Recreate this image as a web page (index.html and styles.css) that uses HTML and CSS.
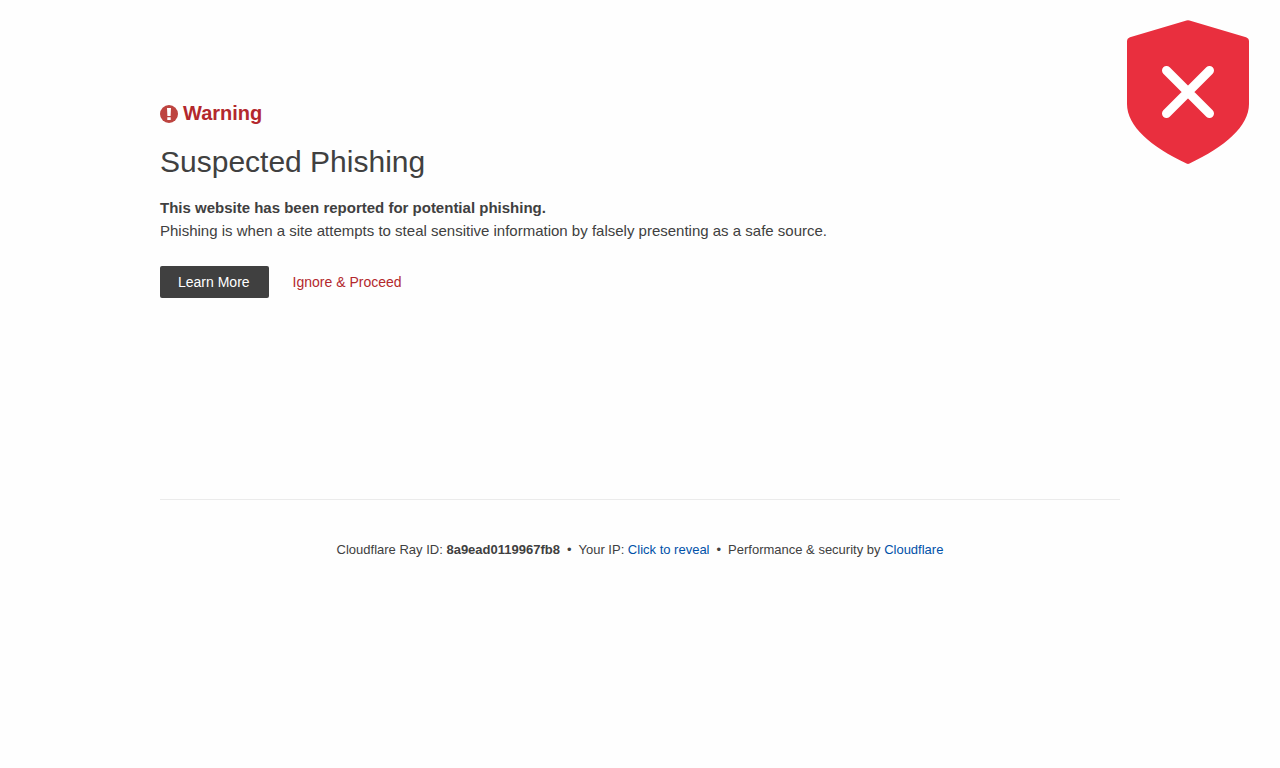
FILE: index.html
```html
<!DOCTYPE html>
<html lang="en">
<head>
    <meta charset="UTF-8">
    <meta name="viewport" content="width=device-width, initial-scale=1.0">
    <title>Suspected Phishing</title>
    <link rel="stylesheet" href="styles.css">
</head>
<body>

    <!-- Shield badge in the corner -->
    <svg class="shield" viewBox="0 0 122 144" aria-hidden="true">
        <path d="M59.500 .4Q61 0 62.500 .4L119 17.200Q122 18.200 122 21.500V84C122 106 98 127 62.500 143.500Q61 144.300 59.500 143.500C24 127 0 106 0 84V21.500Q0 18.200 3 17.200Z" fill="#e92f3e"/>
        <path d="M39.500 50.500L82.500 93.500M82.500 50.500L39.500 93.500" stroke="#fff" stroke-width="9" stroke-linecap="round"/>
    </svg>

    <main class="wrapper">
        <h1 class="warning">
            <svg class="warning-icon" viewBox="0 0 18 18" aria-hidden="true">
                <circle cx="9" cy="9" r="9" fill="#bd4440"/>
                <path d="M7 3h4l-.4 8H7.400zM7.300 12.200h3.400v2.800H7.300z" fill="#fff"/>
            </svg>
            Warning
        </h1>
        <h2 class="title">Suspected Phishing</h2>

        <section class="message">
            <strong>This website has been reported for potential phishing.</strong>
            <p>Phishing is when a site attempts to steal sensitive information by falsely presenting as a safe source.</p>
            <div class="actions">
                <a class="btn" href="#">Learn More</a>
                <button type="button" class="btn-link">Ignore &amp; Proceed</button>
            </div>
        </section>

        <footer class="footer">
            <span>Cloudflare Ray ID: <strong>8a9ead0119967fb8</strong></span>
            <span>&bull;</span>
            <span>Your IP: <button type="button" class="reveal">Click to reveal</button></span>
            <span>&bull;</span>
            <span>Performance &amp; security by <a href="#">Cloudflare</a></span>
        </footer>
    </main>

</body>
</html>
```
FILE: styles.css
```css
/* Reset */
* {
    margin: 0;
    padding: 0;
    box-sizing: border-box;
}

body {
    background: #fefefe;
    color: #404040;
    font-family: "Liberation Sans", Arial, sans-serif;
    font-size: 15px;
    line-height: 23px;
}

a {
    color: #0051a8;
    text-decoration: none;
}

button {
    border: none;
    background: none;
    font: inherit;
    cursor: pointer;
}

.shield {
    position: absolute;
    top: 20px;
    right: 31px;
    width: 122px;
    height: 144px;
}

.wrapper {
    width: 75%;
    margin: 0 auto;
    padding-top: 98px;
}

.warning {
    display: flex;
    align-items: center;
    gap: 5px;
    color: #b3282d;
    font-size: 20px;
    line-height: 30px;
}

.warning-icon {
    width: 18px;
    height: 18px;
    margin-top: 2px;
}

.title {
    margin-top: 14px;
    font-size: 30px;
    font-weight: 400;
    line-height: 39px;
}

.message {
    margin-top: 15px;
}

/* Buttons under the message */
.actions {
    display: flex;
    gap: 24px;
    margin-top: 24px;
    font-size: 14px;
    line-height: 32px;
}

.btn {
    padding: 0 19px 0 18px;
    border-radius: 2px;
    background: #404040;
    color: #fff;
}

.btn-link {
    color: #b3282d;
}

.footer {
    display: flex;
    flex-wrap: wrap;
    justify-content: center;
    gap: 7px;
    margin-top: 201px;
    padding: 38px 0;
    border-top: 1px solid #ebebeb;
    font-size: 13px;
}

.reveal {
    color: #0051a8;
}
```
